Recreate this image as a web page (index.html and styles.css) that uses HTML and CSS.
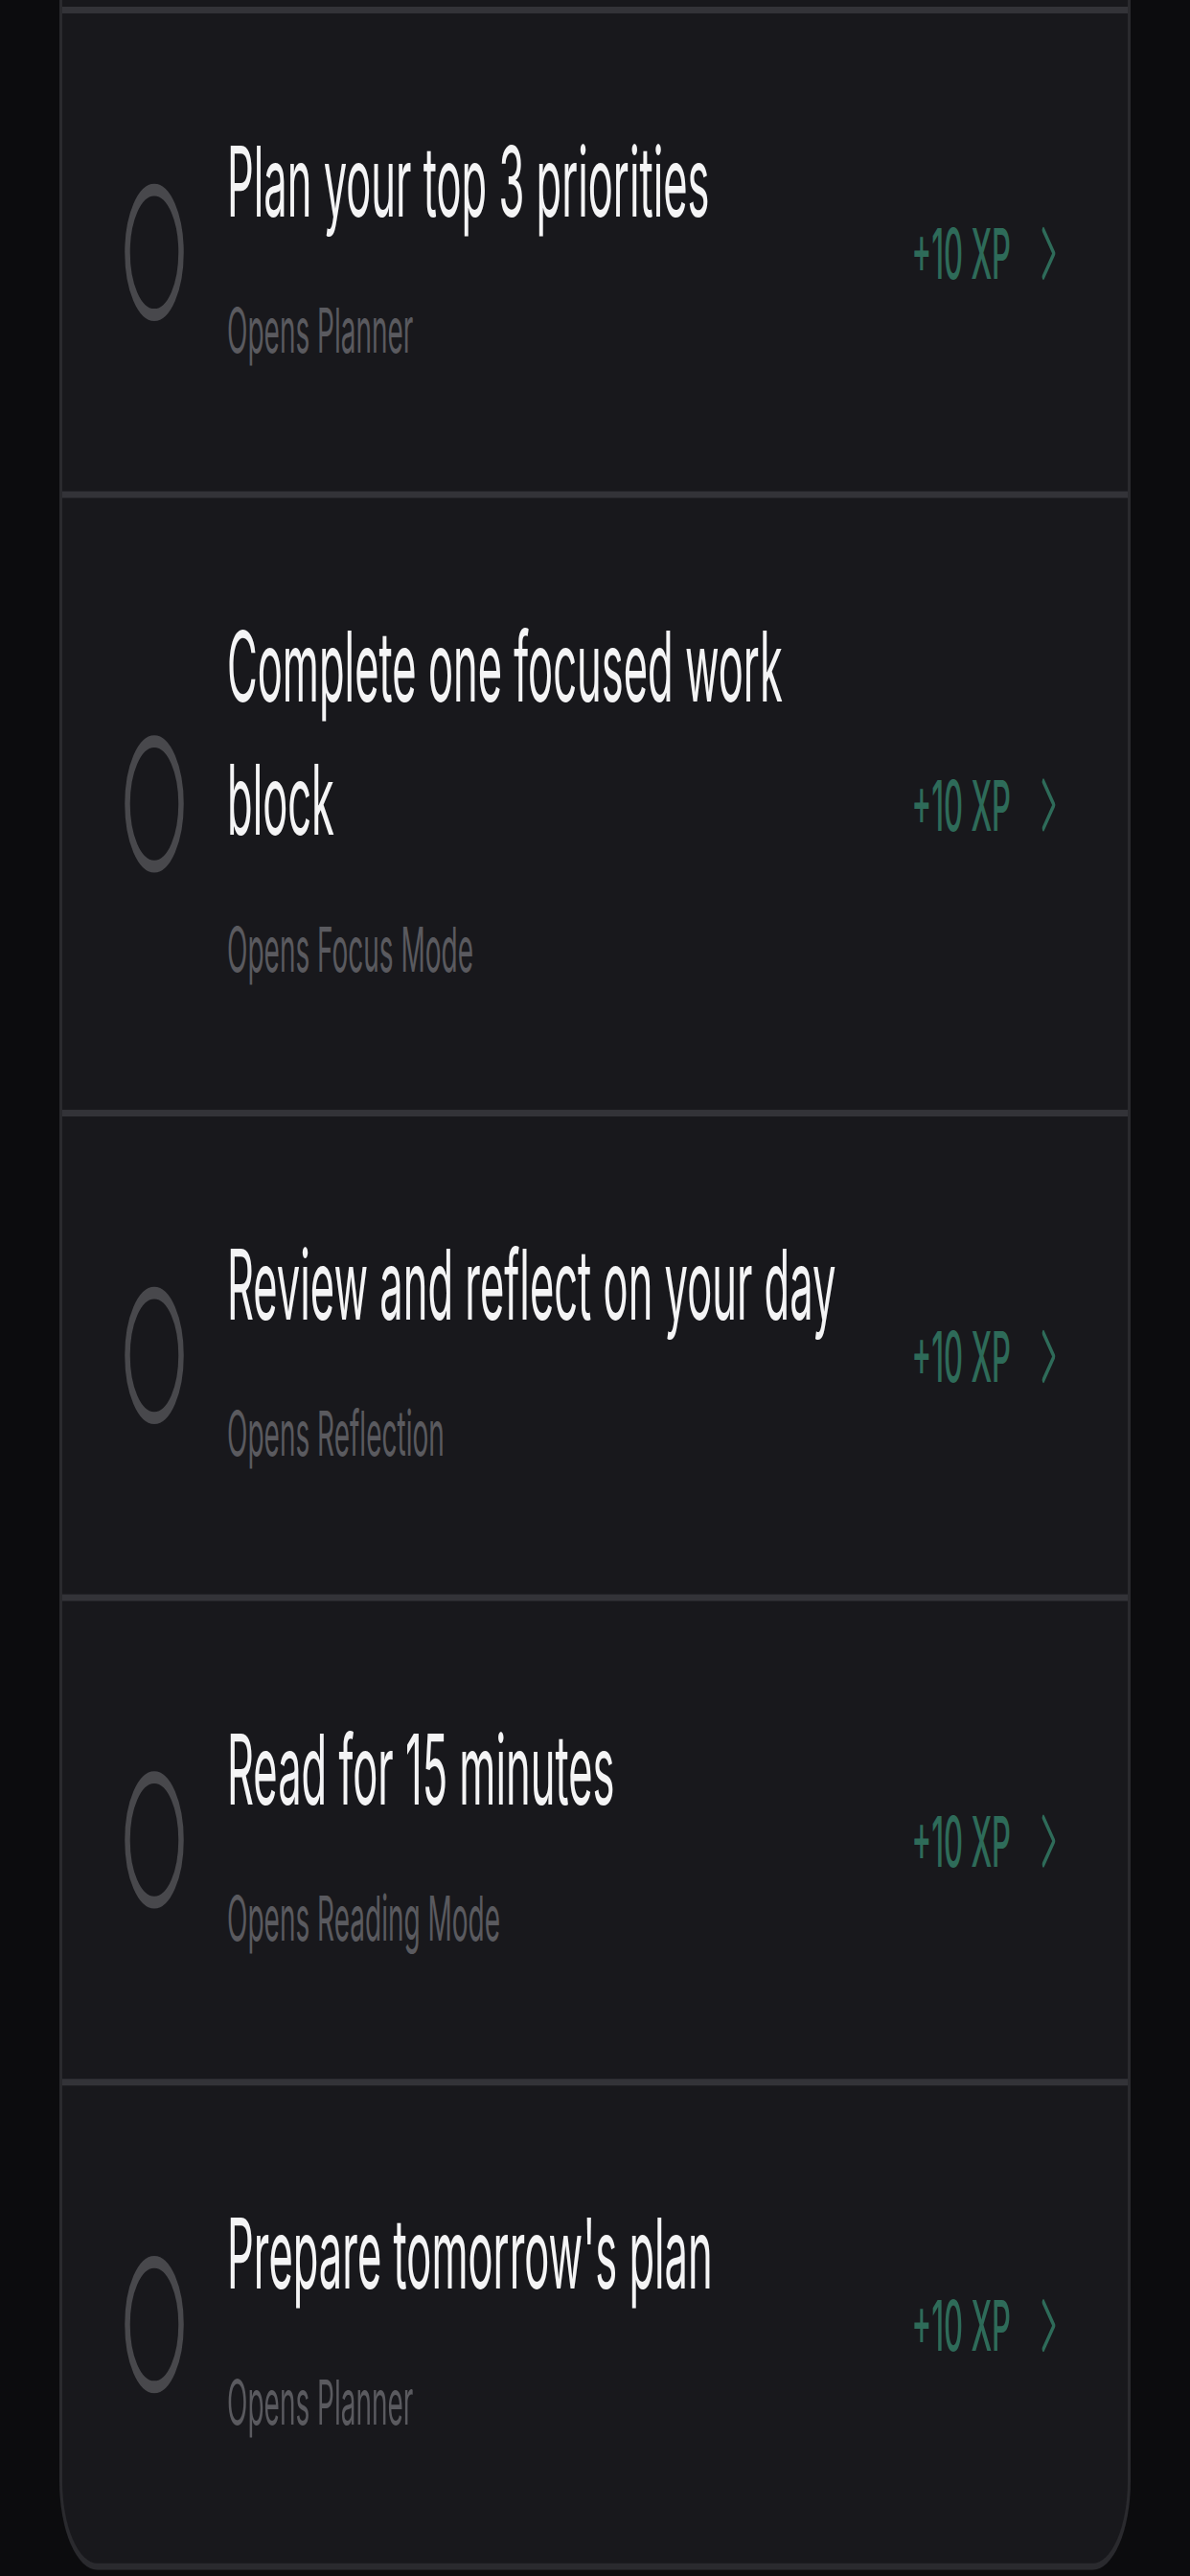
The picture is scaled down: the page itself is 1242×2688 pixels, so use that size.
FILE: index.html
```html
<!DOCTYPE html>
<html>
<head>
    <meta charset="UTF-8">
    <title>Daily quests</title>
    <meta name="viewport" content="width=device-width, initial-scale=1.0">
    <link rel="stylesheet" href="styles.css">
</head>
<body>
    <div class="screen">
        <div class="card">
            <div class="quest">
                <svg class="check" viewBox="0 0 62 62"><circle cx="31" cy="31" r="28" /></svg>
                <div class="quest-text">
                    <div class="title">Plan your top 3 priorities</div>
                    <div class="hint">Opens Planner</div>
                </div>
                <div class="reward">
                    <span class="xp">+10 XP</span>
                    <svg class="chev" viewBox="0 0 17 25"><path d="M3 2 L14 12.5 L3 23" /></svg>
                </div>
            </div>

            <div class="quest">
                <svg class="check" viewBox="0 0 62 62"><circle cx="31" cy="31" r="28" /></svg>
                <div class="quest-text">
                    <div class="title">Complete one focused work block</div>
                    <div class="hint">Opens Focus Mode</div>
                </div>
                <div class="reward">
                    <span class="xp">+10 XP</span>
                    <svg class="chev" viewBox="0 0 17 25"><path d="M3 2 L14 12.5 L3 23" /></svg>
                </div>
            </div>

            <div class="quest">
                <svg class="check" viewBox="0 0 62 62"><circle cx="31" cy="31" r="28" /></svg>
                <div class="quest-text">
                    <div class="title">Review and reflect on your day</div>
                    <div class="hint">Opens Reflection</div>
                </div>
                <div class="reward">
                    <span class="xp">+10 XP</span>
                    <svg class="chev" viewBox="0 0 17 25"><path d="M3 2 L14 12.5 L3 23" /></svg>
                </div>
            </div>

            <div class="quest">
                <svg class="check" viewBox="0 0 62 62"><circle cx="31" cy="31" r="28" /></svg>
                <div class="quest-text">
                    <div class="title">Read for 15 minutes</div>
                    <div class="hint">Opens Reading Mode</div>
                </div>
                <div class="reward">
                    <span class="xp">+10 XP</span>
                    <svg class="chev" viewBox="0 0 17 25"><path d="M3 2 L14 12.5 L3 23" /></svg>
                </div>
            </div>

            <div class="quest">
                <svg class="check" viewBox="0 0 62 62"><circle cx="31" cy="31" r="28" /></svg>
                <div class="quest-text">
                    <div class="title">Prepare tomorrow's plan</div>
                    <div class="hint">Opens Planner</div>
                </div>
                <div class="reward">
                    <span class="xp">+10 XP</span>
                    <svg class="chev" viewBox="0 0 17 25"><path d="M3 2 L14 12.5 L3 23" /></svg>
                </div>
            </div>
        </div>
    </div>
</body>
</html>
```

FILE: styles.css
```css
html, body {
    margin: 0;
    height: 100%;
    overflow: hidden;
    background-color: #0c0c0e;
    font-family: Inter, "Noto Sans", sans-serif;
}
/* the capture is stretched vertically, so the whole view is scaled */
.screen {
    width: 1242px;
    padding: 0 62px;
    box-sizing: border-box;
    transform: scaleY(2.33);
    transform-origin: top left;
}
.card {
    background-color: #18181c;
    border: 3px solid #2a2a2e;
    border-top: none;
    border-radius: 0 0 40px 40px;
    padding-top: 3px;
}
.quest {
    display: flex;
    align-items: center;
    border-top: 3px solid #333338;
    padding: 0 75px 0 65px;
}
.check {
    width: 62px;
    height: 62px;
    flex-shrink: 0;
    margin-right: 45px;
}
.check circle {
    fill: none;
    stroke: #48484c;
    stroke-width: 5.5;
}
.quest-text {
    flex: 1;
    padding: 44.5px 0 54px;
}
.title {
    color: #f4f4f5;
    font-size: 43.5px;
    line-height: 60px;
    max-width: 650px;
}
.hint {
    color: #5a5a5f;
    font-size: 28px;
    line-height: 36px;
    margin-top: 19.5px;
}
.reward {
    display: flex;
    align-items: center;
    gap: 31px;
    margin-right: -1px;
}
.xp {
    color: #2e6b59;
    font-size: 31px;
    font-weight: 500;
}
.chev {
    width: 17px;
    height: 25px;
}
.chev path {
    fill: none;
    stroke: #2e6b59;
    stroke-width: 2.6;
    stroke-linecap: round;
    stroke-linejoin: round;
}
```
